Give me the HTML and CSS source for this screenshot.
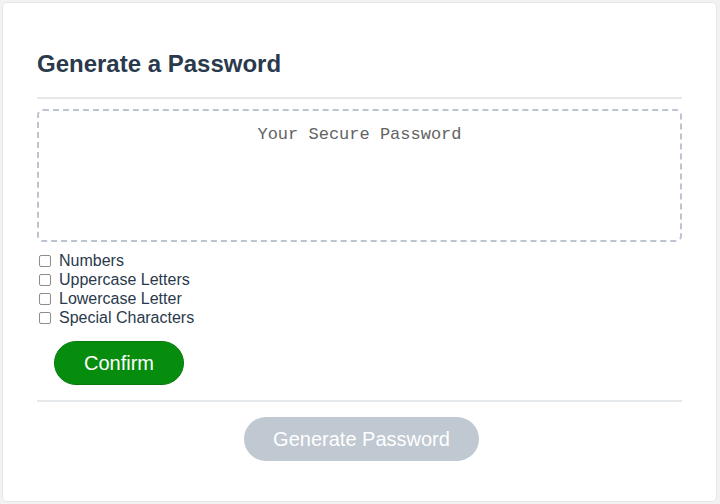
FILE: index.html
```html
<!DOCTYPE html>
<html lang="en">
<head>
<meta charset="utf-8">
<title>Password Generator</title>
<link rel="stylesheet" href="styles.css">
</head>
<body>
  <div class="card">
    <div class="card-header">
      <h2 class="title">Generate a Password</h2>
    </div>
    <div class="card-body">
      <textarea class="password" readonly placeholder="Your Secure Password"></textarea>
      <div class="options">
        <label class="option"><input type="checkbox" class="check"><span>Numbers</span></label>
        <label class="option"><input type="checkbox" class="check"><span>Uppercase Letters</span></label>
        <label class="option"><input type="checkbox" class="check"><span>Lowercase Letter</span></label>
        <label class="option"><input type="checkbox" class="check"><span>Special Characters</span></label>
      </div>
      <button class="btn btn-confirm" type="button">Confirm</button>
    </div>
    <div class="card-footer">
      <button class="btn btn-generate" type="button" disabled>Generate Password</button>
    </div>
  </div>
</body>
</html>
```

FILE: styles.css
```css
* { box-sizing: border-box; }

html, body {
  margin: 0;
  height: 100%;
}

body {
  background: #f2f2f2;
  padding: 2px 3px 2px 2px;
  font-family: "Liberation Sans", Arial, Helvetica, sans-serif;
  color: #2a3a4c;
}

.card {
  background: #ffffff;
  border: 1px solid #e6e6e6;
  border-radius: 5px;
  height: 500px;
  padding: 0 34px;
}

.card-header {
  padding: 47px 0 20px;
  border-bottom: 2px solid #e5e8eb;
}

.title {
  margin: 0;
  font-size: 24px;
  line-height: 27px;
  font-weight: bold;
  color: #2a3a4c;
}

.card-body {
  padding: 10px 0 15px;
  border-bottom: 2px solid #e5e8eb;
}

.password {
  display: block;
  width: 100%;
  height: 133px;
  margin: 0;
  padding: 14px 10px;
  border: 2px dashed #bcc4cf;
  border-radius: 6px;
  resize: none;
  outline: none;
  background: #fff;
  font-family: "Liberation Mono", "Courier New", monospace;
  font-size: 17px;
  line-height: 20px;
  text-align: center;
  color: #555;
}

.password::placeholder {
  color: #636363;
  opacity: 1;
}

.options {
  margin-top: 9px;
  display: flex;
  flex-direction: column;
}

.option {
  display: flex;
  align-items: center;
  height: 19px;
  font-size: 16px;
  line-height: 18px;
}

.check {
  appearance: none;
  -webkit-appearance: none;
  width: 12px;
  height: 12px;
  margin: 0 8px 0 2px;
  border: 1px solid #8d8d8d;
  border-radius: 2px;
  background: #fff;
}

.btn {
  display: block;
  height: 44px;
  padding: 0 30px;
  border: none;
  border-radius: 22px;
  font-family: "Liberation Sans", Arial, Helvetica, sans-serif;
  font-size: 20px;
  line-height: 42px;
  color: #ffffff;
}

.btn-confirm {
  margin: 14px 0 0 17px;
  width: 130px;
  padding: 0;
  background: #078d0e;
  border: 1px solid #0a7a10;
}

.card-footer {
  padding: 15px 0 0 4px;
  display: flex;
  justify-content: center;
}

.btn-generate {
  width: 235px;
  padding: 0;
  background: #c0c8d1;
  color: #fff;
}
```
